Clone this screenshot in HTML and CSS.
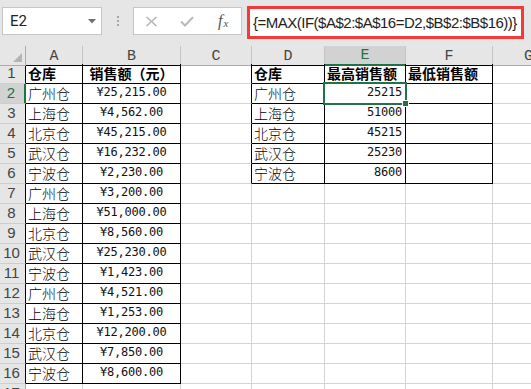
FILE: index.html
```html
<!DOCTYPE html>
<html lang="zh-CN">
<head>
<meta charset="utf-8">
<title>Excel</title>
<link rel="stylesheet" href="styles.css">
</head>
<body>
<div class="fbar">
  <div class="namebox"><span>E2</span><svg width="8" height="5" viewBox="0 0 8 5"><path d="M0 0H8L4 4.5Z" fill="#707070"/></svg></div>
  <div class="grip"><i></i><i></i><i></i></div>
  <div class="fxbox">
    <span class="ico"><svg width="13" height="11" viewBox="0 0 13 11"><path d="M1.5 1L11.5 10M11.5 1L1.5 10" stroke="#b5b5b5" stroke-width="1.6" fill="none"/></svg></span>
    <span class="ico"><svg width="14" height="11" viewBox="0 0 14 11"><path d="M1 5.5L5 9.5L13 1.2" stroke="#b9b9b9" stroke-width="2" fill="none"/></svg></span>
    <span class="ico fx"><i>f</i><em>x</em></span>
  </div>
  <div class="formula">{=MAX(IF($A$2:$A$16=D2,$B$2:$B$16))}</div>
</div>
<div class="sheet">
  <div class="row hdr">
    <div class="corner"><span class="tri"></span></div>
    <div class="ch kb">A</div><div class="ch kb">B</div><div class="ch">C</div><div class="ch kb">D</div><div class="ch sel-h">E</div><div class="ch kb">F</div><div class="ch">G</div>
  </div>
  <div class="row"><div class="rh k">1</div><div class="c k b">仓库</div><div class="c k b ctr">销售额（元）</div><div class="c kr"></div><div class="c k b">仓库</div><div class="c k b">最高销售额</div><div class="c k b">最低销售额</div><div class="c"></div></div>
  <div class="row"><div class="rh sel-r">2</div><div class="c k">广州仓</div><div class="c k n">¥25,215.00</div><div class="c kr"></div><div class="c k">广州仓</div><div class="c k r">25215</div><div class="c k"></div><div class="c"></div></div>
  <div class="row"><div class="rh k">3</div><div class="c k">上海仓</div><div class="c k n">¥4,562.00</div><div class="c kr"></div><div class="c k">上海仓</div><div class="c k r">51000</div><div class="c k"></div><div class="c"></div></div>
  <div class="row"><div class="rh k">4</div><div class="c k">北京仓</div><div class="c k n">¥45,215.00</div><div class="c kr"></div><div class="c k">北京仓</div><div class="c k r">45215</div><div class="c k"></div><div class="c"></div></div>
  <div class="row"><div class="rh k">5</div><div class="c k">武汉仓</div><div class="c k n">¥16,232.00</div><div class="c kr"></div><div class="c k">武汉仓</div><div class="c k r">25230</div><div class="c k"></div><div class="c"></div></div>
  <div class="row"><div class="rh k">6</div><div class="c k">宁波仓</div><div class="c k n">¥2,230.00</div><div class="c kr"></div><div class="c k">宁波仓</div><div class="c k r">8600</div><div class="c k"></div><div class="c"></div></div>
  <div class="row"><div class="rh k">7</div><div class="c k">广州仓</div><div class="c k n">¥3,200.00</div><div class="c"></div><div class="c"></div><div class="c"></div><div class="c"></div><div class="c"></div></div>
  <div class="row"><div class="rh k">8</div><div class="c k">上海仓</div><div class="c k n">¥51,000.00</div><div class="c"></div><div class="c"></div><div class="c"></div><div class="c"></div><div class="c"></div></div>
  <div class="row"><div class="rh k">9</div><div class="c k">北京仓</div><div class="c k n">¥8,560.00</div><div class="c"></div><div class="c"></div><div class="c"></div><div class="c"></div><div class="c"></div></div>
  <div class="row"><div class="rh k">10</div><div class="c k">武汉仓</div><div class="c k n">¥25,230.00</div><div class="c"></div><div class="c"></div><div class="c"></div><div class="c"></div><div class="c"></div></div>
  <div class="row"><div class="rh k">11</div><div class="c k">宁波仓</div><div class="c k n">¥1,423.00</div><div class="c"></div><div class="c"></div><div class="c"></div><div class="c"></div><div class="c"></div></div>
  <div class="row"><div class="rh k">12</div><div class="c k">广州仓</div><div class="c k n">¥4,521.00</div><div class="c"></div><div class="c"></div><div class="c"></div><div class="c"></div><div class="c"></div></div>
  <div class="row"><div class="rh k">13</div><div class="c k">上海仓</div><div class="c k n">¥1,253.00</div><div class="c"></div><div class="c"></div><div class="c"></div><div class="c"></div><div class="c"></div></div>
  <div class="row"><div class="rh k">14</div><div class="c k">北京仓</div><div class="c k n">¥12,200.00</div><div class="c"></div><div class="c"></div><div class="c"></div><div class="c"></div><div class="c"></div></div>
  <div class="row"><div class="rh k">15</div><div class="c k">武汉仓</div><div class="c k n">¥7,850.00</div><div class="c"></div><div class="c"></div><div class="c"></div><div class="c"></div><div class="c"></div></div>
  <div class="row"><div class="rh k">16</div><div class="c k">宁波仓</div><div class="c k n">¥8,600.00</div><div class="c"></div><div class="c"></div><div class="c"></div><div class="c"></div><div class="c"></div></div>
  <div class="row"><div class="rh">17</div><div class="c"></div><div class="c"></div><div class="c"></div><div class="c"></div><div class="c"></div><div class="c"></div><div class="c"></div></div>
  <div class="sel"><i class="handle"></i></div>
</div>
</body>
</html>
```
FILE: styles.css
```css
* { box-sizing: border-box; margin: 0; padding: 0; }
body {
  margin: 0;
  width: 531px;
  height: 389px;
  overflow: hidden;
  background: #fff;
  font-family: "Noto Sans CJK SC", sans-serif;
}
.fbar {
  height: 46px;
  background: #e6e6e6;
  display: flex;
  align-items: flex-start;
  padding: 7px 0 0 2px;
}
.namebox {
  width: 100px;
  height: 28px;
  background: #fff;
  border: 1px solid #c6c6c6;
  display: flex;
  align-items: center;
  justify-content: space-between;
  padding: 0 5px 0 7px;
  font: 15px Roboto, sans-serif;
  color: #222;
}
.grip {
  width: 31px;
  height: 28px;
  display: flex;
  flex-direction: column;
  align-items: center;
  justify-content: center;
  gap: 2px;
}
.grip i { display: block; width: 2px; height: 2px; background: #a6a6a6; }
.fxbox {
  width: 109px;
  height: 28px;
  background: #fff;
  border: 1px solid #c6c6c6;
  display: grid;
  grid-template-columns: repeat(3, 1fr);
  align-items: center;
  justify-items: center;
}
.ico { display: flex; align-items: center; }
.fx { font-family: "Liberation Serif", serif; color: #555; }
.fx i { font-size: 16px; font-style: italic; }
.fx em { font-size: 11px; font-style: italic; margin-left: 1px; margin-top: 3px; }
.formula {
  margin: -1px 0 0 5px;
  width: 277px;
  height: 33px;
  border: 3px solid #f23a3a;
  background: #fff;
  display: flex;
  align-items: center;
  padding: 0 0 1px 3px;
  font: 15px "Liberation Sans", sans-serif;
  letter-spacing: -0.5px;
  color: #222;
  white-space: nowrap;
  overflow: hidden;
}
.sheet { position: relative; }
.row {
  display: grid;
  grid-template-columns: 26px 57px 98px 71px 73px 81px 87px 72px;
  height: 20px;
}
.row.hdr { height: 18px; }
.corner {
  background: #e6e6e6;
  border-right: 1px solid #ababab;
  border-bottom: 1px solid #ababab;
  position: relative;
}
.tri {
  position: absolute;
  right: 3px;
  bottom: 3px;
  width: 0;
  height: 0;
  border-left: 9px solid transparent;
  border-bottom: 9px solid #b4b4b4;
}
.ch {
  background: #e6e6e6;
  border-right: 1px solid #c4c4c4;
  border-bottom: 1px solid #ababab;
  display: flex;
  align-items: center;
  justify-content: center;
  font: 15px "Liberation Mono", monospace;
  color: #444;
  padding-top: 1px;
}
.ch.kb { border-bottom-color: #000; }
.ch.sel-h {
  background: #d2d2d2;
  color: #217346;
  border-bottom: 2px solid #217346;
}
.rh {
  background: #e6e6e6;
  border-right: 1px solid #ababab;
  border-bottom: 1px solid #cdcdcd;
  display: flex;
  align-items: flex-end;
  justify-content: center;
  padding: 0 2px 2px 0;
  font: 15px "Liberation Sans", sans-serif;
  line-height: 16px;
  color: #444;
}
.rh.k { border-right-color: #000; }
.rh.sel-r {
  background: #d2d2d2;
  color: #217346;
  border-right: 2px solid #217346;
}
.c {
  border-right: 1px solid #d4d4d4;
  border-bottom: 1px solid #d4d4d4;
  display: flex;
  align-items: flex-end;
  padding: 0 2px 1px;
  white-space: nowrap;
  overflow: hidden;
  font-size: 14px;
  font-weight: 300;
  line-height: 17px;
  color: #000;
}
.c.k { border-right-color: #000; border-bottom-color: #000; }
.c.kr { border-right-color: #000; }
.c.b { font-weight: 700; }
.c.ctr { justify-content: center; }
.c.n, .c.r {
  font-family: "DejaVu Sans Mono", monospace;
  font-size: 12px;
  font-weight: 400;
  letter-spacing: -0.2px;
  padding-bottom: 2px;
  color: #111;
}
.c.n { justify-content: center; }
.c.r { justify-content: flex-end; padding-right: 3px; }
.sel {
  position: absolute;
  left: 323px;
  top: 36px;
  width: 84px;
  height: 23px;
  border: 2px solid #217346;
}
.handle {
  position: absolute;
  left: 77px;
  top: 16px;
  width: 7px;
  height: 7px;
  background: #217346;
  border: 1px solid #fff;
}
```
